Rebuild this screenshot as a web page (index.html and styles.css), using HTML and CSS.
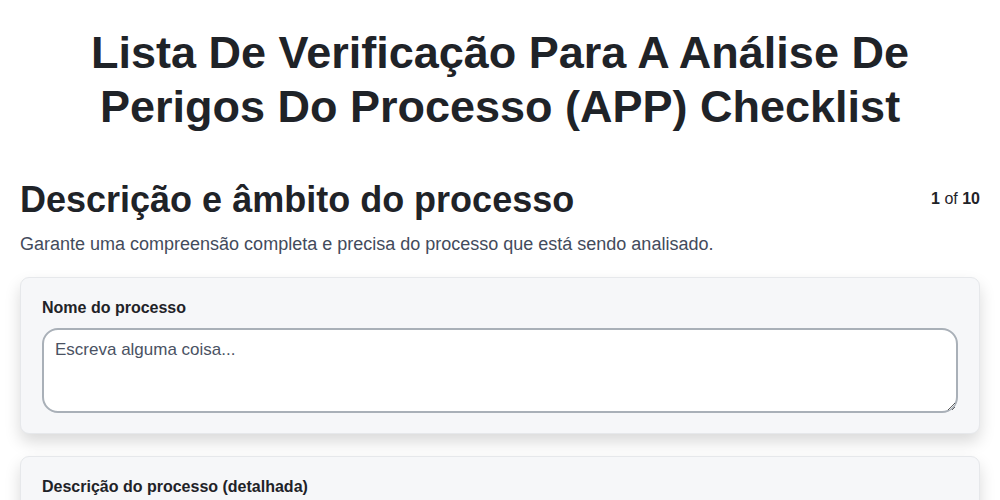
FILE: index.html
```html
<!DOCTYPE html>
<html lang="pt">
<head>
  <meta charset="UTF-8">
  <title>Lista De Verificação APP</title>
  <link rel="stylesheet" href="styles.css">
</head>
<body>
  <div class="page">
    <h1 class="title">Lista De Verificação Para A Análise De Perigos Do Processo (APP) Checklist</h1>
    <div class="section-head">
      <h2>Descrição e âmbito do processo</h2>
      <div class="counter"><b>1</b> of <b>10</b></div>
    </div>
    <p class="section-desc">Garante uma compreensão completa e precisa do processo que está sendo analisado.</p>
    <div class="card">
      <label class="field-label">Nome do processo</label>
      <textarea class="field" placeholder="Escreva alguma coisa..."></textarea>
    </div>
    <div class="card">
      <label class="field-label">Descrição do processo (detalhada)</label>
      <textarea class="field" placeholder="Escreva alguma coisa..."></textarea>
    </div>
  </div>
</body>
</html>
```

FILE: styles.css
```css
body {
  margin: 0;
  font-family: "Liberation Sans", Arial, sans-serif;
  color: #1f2328;
  background: #fff;
}
.page {
  padding: 0 20px;
}
.title {
  font-size: 45px;
  line-height: 54px;
  text-align: center;
  margin: 26px 50px 0;
  font-weight: bold;
}
.section-head {
  display: flex;
  justify-content: space-between;
  align-items: flex-start;
  margin-top: 44px;
}
.section-head h2 {
  margin: 0;
  font-size: 36px;
  line-height: 44px;
}
.counter {
  font-size: 16px;
  margin-top: 12px;
}
.section-desc {
  margin: 12px 0 0;
  font-size: 18px;
  color: #434b5c;
}
.card {
  margin-top: 22px;
  background: #f6f7f9;
  border: 1px solid #e6e8eb;
  border-radius: 9px;
  padding: 21px 21px 20px;
  box-shadow: 0 8px 16px rgba(0, 0, 0, 0.15);
}
.field-label {
  display: block;
  font-size: 16px;
  font-weight: bold;
  margin-bottom: 11px;
}
.field {
  display: block;
  width: 100%;
  box-sizing: border-box;
  height: 85px;
  border: 2px solid #a9b0b8;
  border-radius: 16px;
  padding: 10px 11px;
  font-family: "Liberation Sans", Arial, sans-serif;
  font-size: 17px;
  background: #fff;
}
.field::placeholder {
  color: #4a5263;
}
```
